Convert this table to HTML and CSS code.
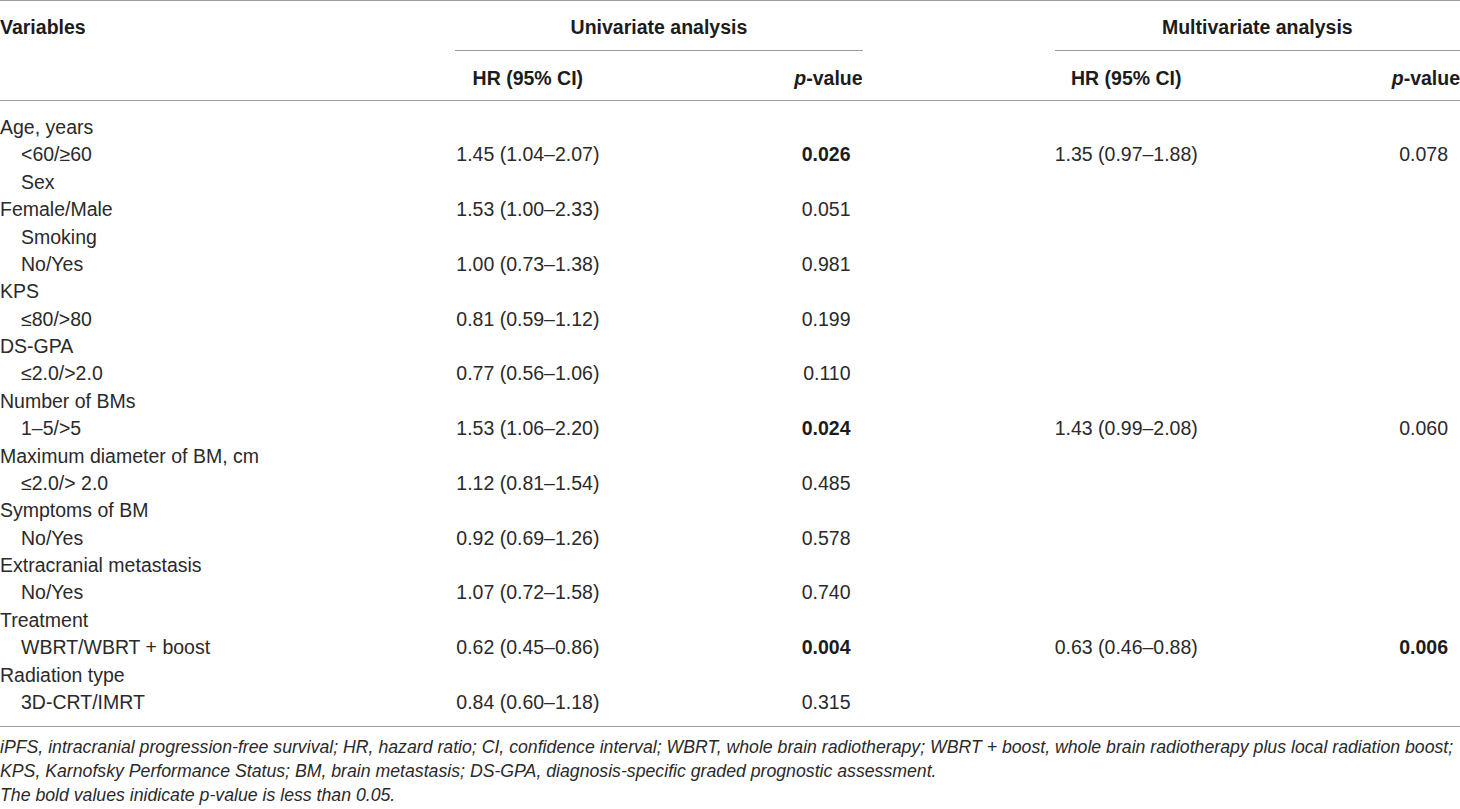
FILE: index.html
```html
<!DOCTYPE html>
<html lang="en">
<head>
  <meta charset="UTF-8">
  <title>Cox regression analysis of iPFS</title>
  <link rel="stylesheet" href="styles.css">
</head>
<body>
  <table class="results">
    <colgroup>
      <col class="c-var">
      <col class="c-hr">
      <col class="c-p">
      <col class="c-gap">
      <col class="c-hr2">
      <col class="c-p">
    </colgroup>
    <thead>
      <tr class="group-row">
        <th class="var-head">Variables</th>
        <th class="group" colspan="2">Univariate analysis</th>
        <th></th>
        <th class="group" colspan="2">Multivariate analysis</th>
      </tr>
      <tr class="sub-row">
        <th></th>
        <th class="hr">HR (95% CI)</th>
        <th class="pv"><i>p</i>-value</th>
        <th></th>
        <th class="hr">HR (95% CI)</th>
        <th class="pv"><i>p</i>-value</th>
      </tr>
    </thead>
    <tbody>
      <tr><td>Age, years</td><td></td><td></td><td></td><td></td><td></td></tr>
      <tr><td class="sub">&lt;60/≥60</td><td class="hr">1.45 (1.04–2.07)</td><td class="pv"><b>0.026</b></td><td></td><td class="hr">1.35 (0.97–1.88)</td><td class="pv">0.078</td></tr>
      <tr><td class="sub">Sex</td><td></td><td></td><td></td><td></td><td></td></tr>
      <tr><td>Female/Male</td><td class="hr">1.53 (1.00–2.33)</td><td class="pv">0.051</td><td></td><td></td><td></td></tr>
      <tr><td class="sub">Smoking</td><td></td><td></td><td></td><td></td><td></td></tr>
      <tr><td class="sub">No/Yes</td><td class="hr">1.00 (0.73–1.38)</td><td class="pv">0.981</td><td></td><td></td><td></td></tr>
      <tr><td>KPS</td><td></td><td></td><td></td><td></td><td></td></tr>
      <tr><td class="sub">≤80/&gt;80</td><td class="hr">0.81 (0.59–1.12)</td><td class="pv">0.199</td><td></td><td></td><td></td></tr>
      <tr><td>DS-GPA</td><td></td><td></td><td></td><td></td><td></td></tr>
      <tr><td class="sub">≤2.0/&gt;2.0</td><td class="hr">0.77 (0.56–1.06)</td><td class="pv">0.110</td><td></td><td></td><td></td></tr>
      <tr><td>Number of BMs</td><td></td><td></td><td></td><td></td><td></td></tr>
      <tr><td class="sub">1–5/&gt;5</td><td class="hr">1.53 (1.06–2.20)</td><td class="pv"><b>0.024</b></td><td></td><td class="hr">1.43 (0.99–2.08)</td><td class="pv">0.060</td></tr>
      <tr><td>Maximum diameter of BM, cm</td><td></td><td></td><td></td><td></td><td></td></tr>
      <tr><td class="sub">≤2.0/&gt; 2.0</td><td class="hr">1.12 (0.81–1.54)</td><td class="pv">0.485</td><td></td><td></td><td></td></tr>
      <tr><td>Symptoms of BM</td><td></td><td></td><td></td><td></td><td></td></tr>
      <tr><td class="sub">No/Yes</td><td class="hr">0.92 (0.69–1.26)</td><td class="pv">0.578</td><td></td><td></td><td></td></tr>
      <tr><td>Extracranial metastasis</td><td></td><td></td><td></td><td></td><td></td></tr>
      <tr><td class="sub">No/Yes</td><td class="hr">1.07 (0.72–1.58)</td><td class="pv">0.740</td><td></td><td></td><td></td></tr>
      <tr><td>Treatment</td><td></td><td></td><td></td><td></td><td></td></tr>
      <tr><td class="sub">WBRT/WBRT + boost</td><td class="hr">0.62 (0.45–0.86)</td><td class="pv"><b>0.004</b></td><td></td><td class="hr">0.63 (0.46–0.88)</td><td class="pv"><b>0.006</b></td></tr>
      <tr><td>Radiation type</td><td></td><td></td><td></td><td></td><td></td></tr>
      <tr><td class="sub">3D-CRT/IMRT</td><td class="hr">0.84 (0.60–1.18)</td><td class="pv">0.315</td><td></td><td></td><td></td></tr>
    </tbody>
  </table>
  <div class="notes">
    <p>iPFS, intracranial progression-free survival; HR, hazard ratio; CI, confidence interval; WBRT, whole brain radiotherapy; WBRT + boost, whole brain radiotherapy plus local radiation boost;</p>
    <p>KPS, Karnofsky Performance Status; BM, brain metastasis; DS-GPA, diagnosis-specific graded prognostic assessment.</p>
    <p>The bold values inidicate p-value is less than 0.05.</p>
  </div>
</body>
</html>
```

FILE: styles.css
```css
body {
  margin: 0;
  background: #fff;
  color: #2a2a2a;
  font-family: "Liberation Sans", Arial, sans-serif;
}
.results {
  width: 1460px;
  border-collapse: collapse;
  table-layout: fixed;
  font-size: 19.5px;
  border-top: 1px solid #9c9c9c;
  border-bottom: 1px solid #9c9c9c;
}
.c-var { width: 455px; }
.c-hr { width: 145px; }
.c-p { width: 262px; }
.c-gap { width: 192px; }
.c-hr2 { width: 143px; }
th {
  font-weight: bold;
  color: #1c1c1c;
  padding: 0;
  line-height: 22px;
}
.group-row th {
  height: 50px;
  box-sizing: border-box;
  padding-top: 3px;
}
.var-head {
  text-align: left;
}
.group {
  text-align: center;
  border-bottom: 1px solid #9c9c9c;
}
.sub-row th {
  height: 50px;
  box-sizing: border-box;
  padding-top: 5px;
  border-bottom: 1px solid #9c9c9c;
}
td {
  padding: 0;
  height: 27.38px;
  line-height: 27.38px;
  white-space: nowrap;
}
tbody tr:first-child td {
  padding-top: 13px;
}
tbody tr:last-child td {
  padding-bottom: 10px;
}
.sub {
  padding-left: 21px;
}
.hr {
  text-align: center;
}
.pv {
  text-align: right;
}
td.pv {
  padding-right: 12px;
}
td.pv b {
  color: #1c1c1c;
}
.notes {
  padding-top: 8px;
  font-size: 17.7px;
  font-style: italic;
}
.notes p {
  margin: 0;
  line-height: 24px;
  white-space: nowrap;
}
```
